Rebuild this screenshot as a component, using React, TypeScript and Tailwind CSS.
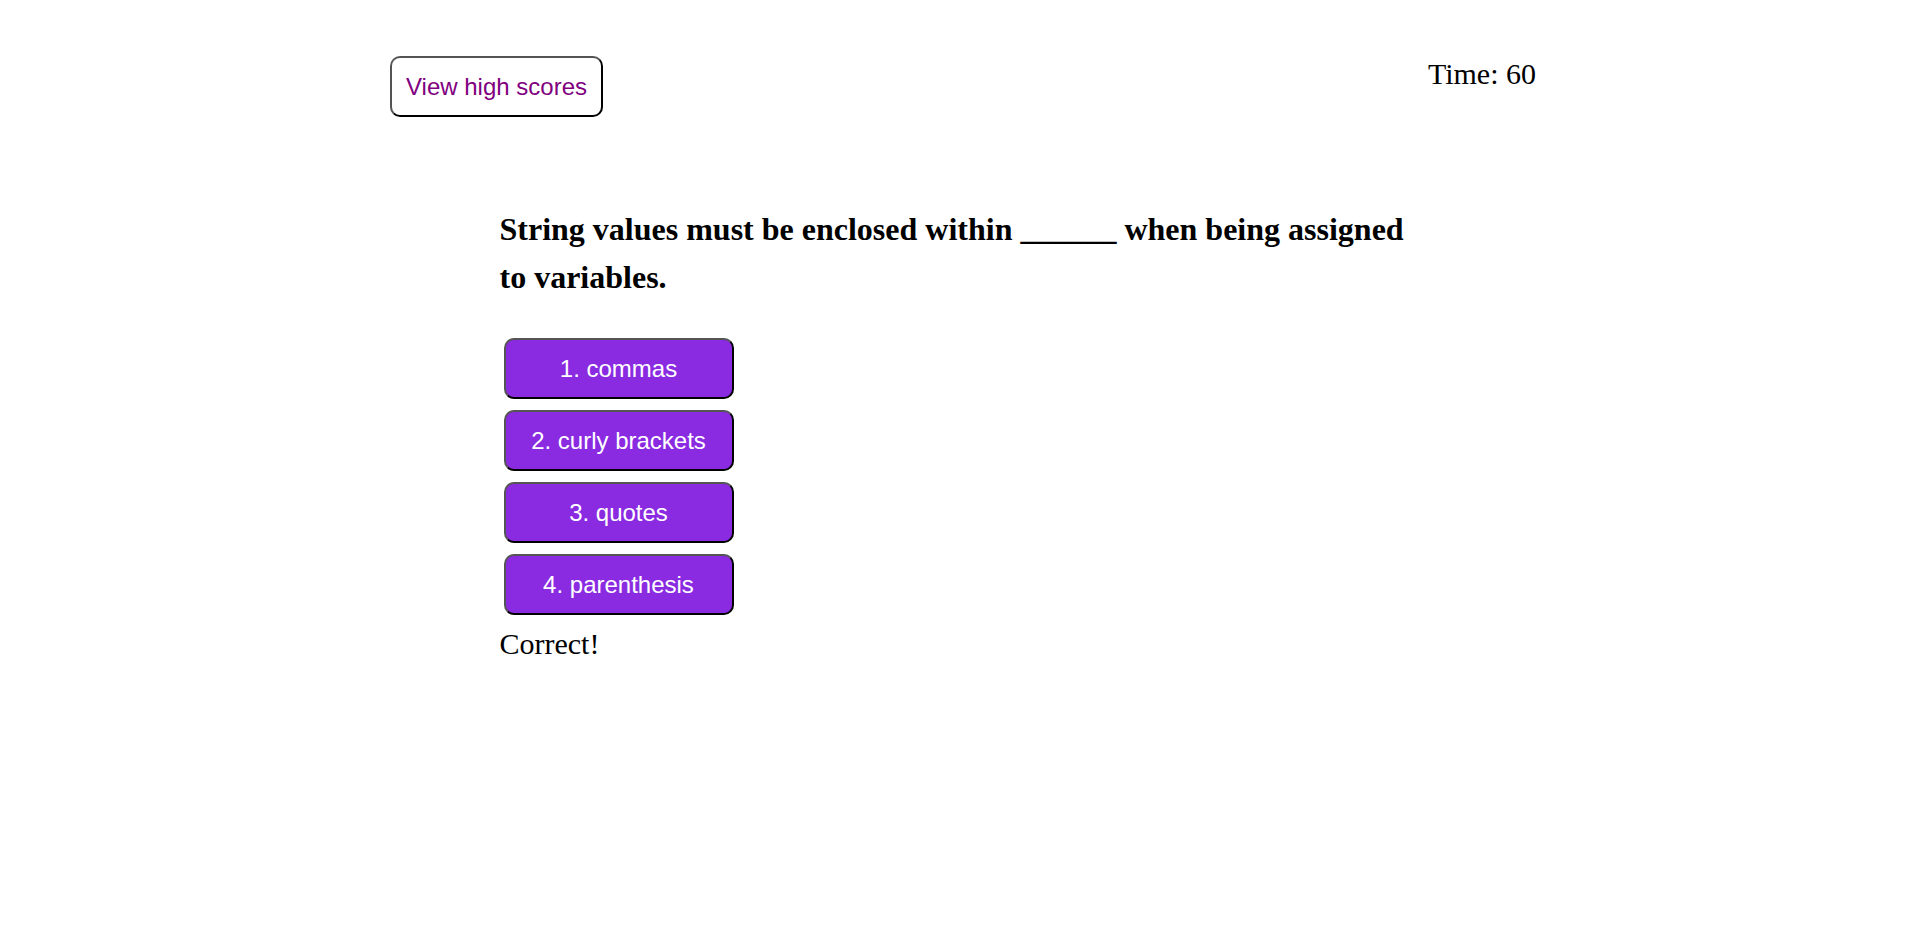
const answers = ["1. commas", "2. curly brackets", "3. quotes", "4. parenthesis"];

export default function App() {
  return (
    <div className="min-h-[927px] w-full bg-white font-['Liberation_Serif',serif] text-black">
      <div className="mx-auto w-[1152px]">
        {/* Header */}
        <div className="flex items-start justify-between pt-[56px] pl-[6px]">
          <button className="h-[61px] rounded-[10px] border-2 border-black bg-white px-[14px] font-['Liberation_Sans',Arial,sans-serif] text-[24px] text-[#800080] [border-style:outset]">
            View high scores
          </button>
          <div className="mt-[1px] text-[30px] leading-[33px]">Time: 60</div>
        </div>

        {/* Question card */}
        <div className="mx-auto mt-[88px] w-[921px]">
          <h2 className="text-[32px] font-bold leading-[48px]">
            String values must be enclosed within ______ when being assigned to variables.
          </h2>
          <div className="mt-[37px] flex flex-col gap-[11px] pl-[4px]">
            {answers.map((a) => (
              <button
                key={a}
                className="h-[61px] w-[230px] rounded-[10px] border-2 border-black bg-[#8a2be2] font-['Liberation_Sans',Arial,sans-serif] text-[24px] text-white [border-style:outset]"
              >
                {a}
              </button>
            ))}
          </div>
          <div className="mt-[12px] text-[30px] leading-[34px]">Correct!</div>
        </div>
      </div>
    </div>
  );
}
